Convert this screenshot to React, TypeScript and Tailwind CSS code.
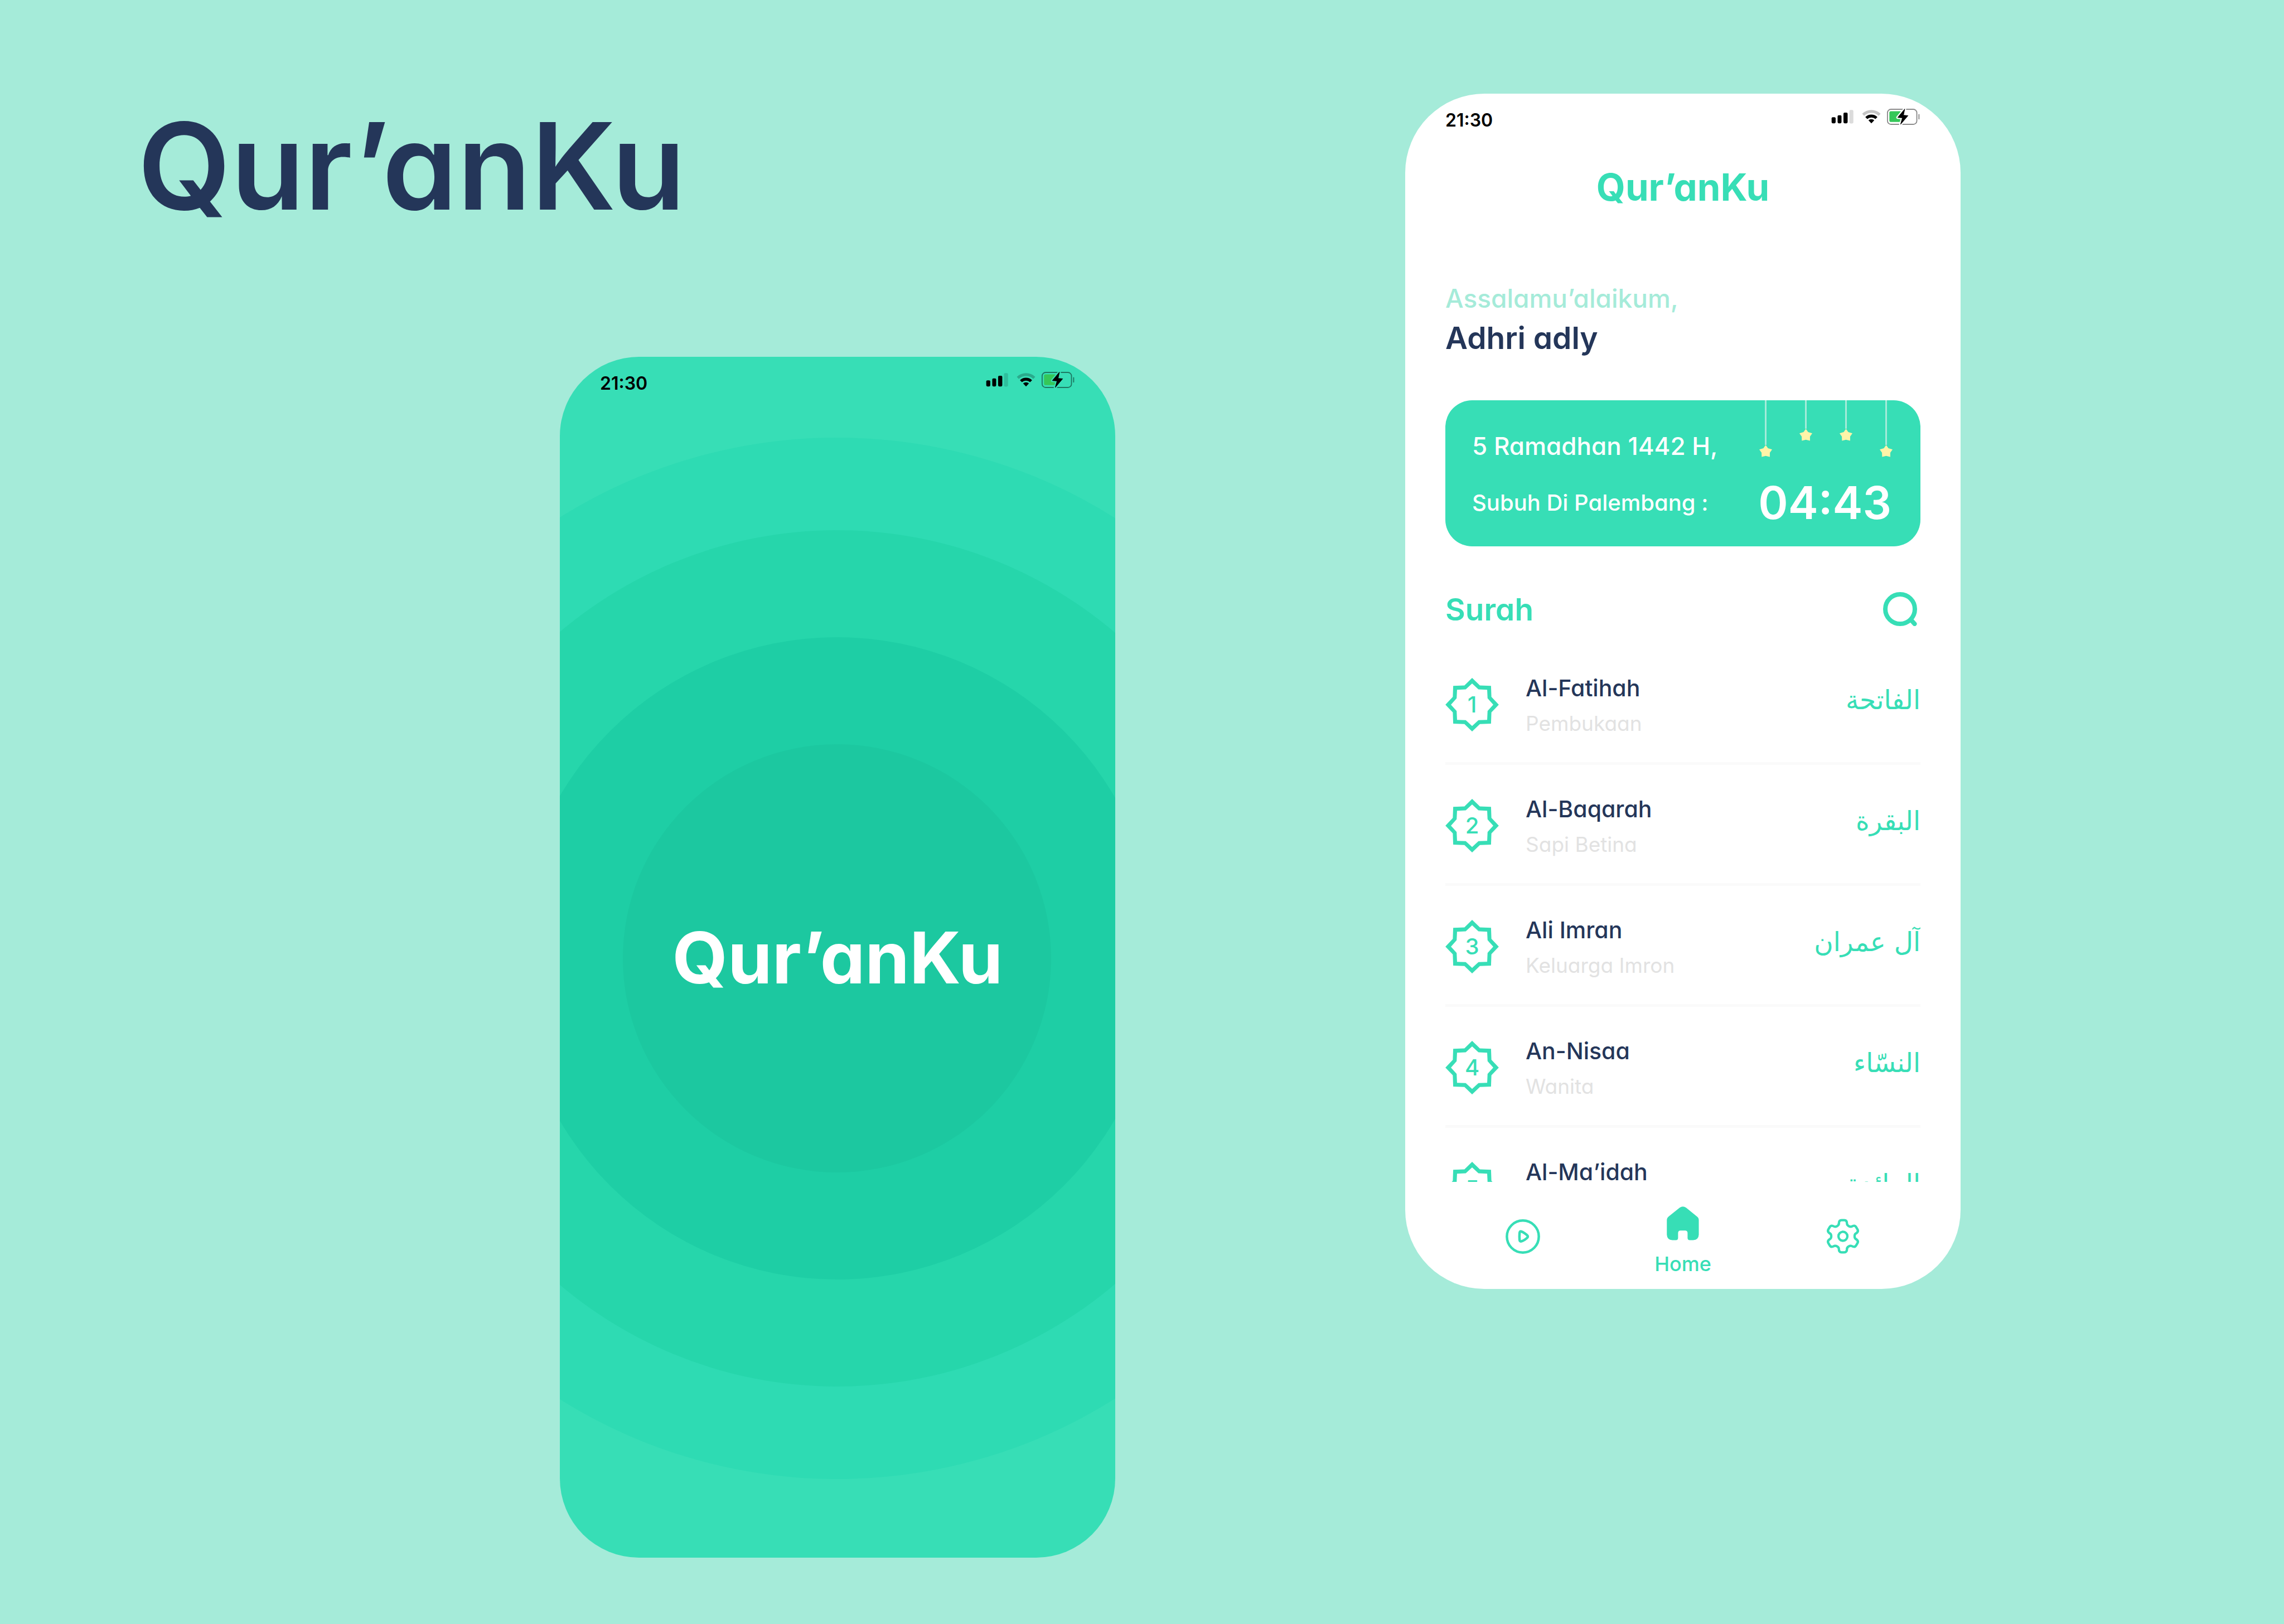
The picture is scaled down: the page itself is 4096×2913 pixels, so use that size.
import { useId } from "react";

type Surah = { number: number; name: string; meaning: string; arabic: string };

const surahs: Surah[] = [
  { number: 1, name: "Al-Fatihah", meaning: "Pembukaan", arabic: "الفاتحة" },
  { number: 2, name: "Al-Baqarah", meaning: "Sapi Betina", arabic: "البقرة" },
  { number: 3, name: "Ali Imran", meaning: "Keluarga Imron", arabic: "آل عمران" },
  { number: 4, name: "An-Nisaa", meaning: "Wanita", arabic: "النسّاء" },
  { number: 5, name: "Al-Ma’idah", meaning: "Hidangan", arabic: "المائدة" },
];

function StatusIcons() {
  const maskId = useId();
  const bolt = "M675 103 L621 168 L657 171 L643 221 L700 154 L665 151 Z";
  return (
    <svg className="h-[29px] w-[161px]" viewBox="112 101 678 124" aria-hidden="true">
      <rect x="114" y="166" width="31" height="47" rx="9" />
      <rect x="160" y="151" width="30" height="62" rx="9" />
      <rect x="205" y="131" width="32" height="82" rx="9" />
      <rect x="250" y="111" width="31" height="103" rx="9" opacity="0.14" />
      <g fill="none" stroke="#000">
        <path d="M355.8 147.6 A91 91 0 0 1 482.2 147.6" strokeWidth="22" opacity="0.23" />
        <path d="M380.1 172.7 A56 56 0 0 1 457.9 172.7" strokeWidth="22" />
      </g>
      <path d="M419 213 L396.5 190 A32 32 0 0 1 441.5 190 Z" />
      <mask id={maskId} maskUnits="userSpaceOnUse" x="500" y="90" width="300" height="150">
        <rect x="500" y="90" width="300" height="150" fill="#fff" />
        <path d={bolt} fill="#000" stroke="#000" strokeWidth="22" strokeLinejoin="round" />
      </mask>
      <g mask={`url(#${maskId})`}>
        <rect x="542.5" y="105.5" width="225" height="115" rx="27" fill="none" stroke="#000" strokeWidth="8" opacity="0.46" />
        <rect x="557" y="120" width="92" height="83" rx="12" fill="#35C759" />
      </g>
      <path d={bolt} stroke="#000" strokeWidth="4" strokeLinejoin="round" />
      <rect x="780" y="142" width="8" height="41" rx="4" opacity="0.46" />
    </svg>
  );
}

function StatusBar() {
  return (
    <div className="relative flex h-[100px] items-start justify-between px-[72px] pt-[27px]">
      <time className="pt-1 text-[32px] leading-[34px] font-semibold text-black">21:30</time>
      <StatusIcons />
    </div>
  );
}

function Badge({ value }: { value: number }) {
  return (
    <span className="relative flex size-24 shrink-0 items-center justify-center text-[40px] leading-none font-medium">
      <svg className="absolute inset-0 size-full" viewBox="17 31 404 405" aria-hidden="true">
        <path
          fill="currentColor"
          fillRule="evenodd"
          d="M219 31 278 88 362 91 365 174 421 234 365 292 362 377 278 380 219 436 161 380 76 377 73 292 17 234 73 174 76 91 161 88Z M219 73 267 117 333 121 336 185 379 234 336 281 333 348 267 351 219 395 171 351 105 348 102 281 59 234 102 185 105 121 171 117Z"
        />
      </svg>
      {value}
    </span>
  );
}

function HangingStar({ long = false }: { long?: boolean }) {
  return (
    <span className="flex flex-col items-center">
      <span className={long ? "h-20 w-[3px] bg-[#A5EBD9]" : "h-[51px] w-[3px] bg-[#A5EBD9]"} />
      <svg className="h-[22px] w-[23px]" viewBox="417 246 96 90">
        <path fill="#FFF4A8" d="M465 246 482 270 513 279 496 304 496 335 465 327 435 335 434 304 417 279 448 270Z" />
      </svg>
    </span>
  );
}

function SearchIcon() {
  return (
    <svg className="size-[61px]" viewBox="0 0 61 61" fill="none" stroke="currentColor" strokeWidth="8" aria-hidden="true">
      <circle cx="30.5" cy="30.5" r="26.5" />
      <path d="M51 51 L56.5 57" strokeLinecap="round" />
    </svg>
  );
}

function PlayIcon() {
  return (
    <svg className="h-[62px] w-[62px]" viewBox="47 164 262 262" fill="none" stroke="currentColor" strokeWidth="19" aria-hidden="true">
      <circle cx="178" cy="295" r="121" />
      <path d="M163 256 C180 260 205 278 213 288 Q218 295 213 302 C205 312 180 329 163 332 Q154 333 153 320 Q151 295 153 269 Q155 255 163 256Z" />
    </svg>
  );
}

function HomeIcon() {
  return (
    <svg className="h-[61px] w-[58px]" viewBox="1270 72 245 256" fill="currentColor" aria-hidden="true">
      <path d="M1368 81 Q1392 64 1417 81 L1500 148 Q1513 158 1513 175 V286 Q1511 325 1470 327 H1445 Q1428 327 1428 310 V273 Q1428 254 1409 254 H1374 Q1356 254 1356 273 V310 Q1356 327 1339 327 H1313 Q1273 325 1271 286 V175 Q1271 158 1285 147 Z" />
    </svg>
  );
}

function GearIcon() {
  return (
    <svg className="h-[63px] w-[58px]" viewBox="-123 -133 246 266" fill="none" stroke="currentColor" strokeWidth="18" strokeLinecap="round" aria-hidden="true">
      <circle r="34" />
      {[0, 60, 120, 180, 240, 300].map((angle) => (
        <path
          key={angle}
          transform={`rotate(${angle})`}
          d="M-31 -95 C-31 -112 -24 -122 -10 -122 H10 C24 -122 31 -112 31 -95 C31 -81 54.6 -67.3 66.8 -74.3"
        />
      ))}
    </svg>
  );
}

function SplashScreen() {
  return (
    <section className="relative flex min-h-[2154px] w-full max-w-[996px] flex-col overflow-hidden rounded-[142px] bg-[#37DEB6]">
      <svg className="absolute inset-0 size-full" viewBox="0 0 996 2154" preserveAspectRatio="xMidYMid slice" aria-hidden="true">
        <circle cx="497" cy="1079" r="934" fill="#2EDBB3" />
        <circle cx="497" cy="1079" r="768" fill="#26D6AB" />
        <circle cx="497" cy="1079" r="576" fill="#1ECEA5" />
        <circle cx="497" cy="1079" r="384" fill="#1CC8A0" />
      </svg>
      <StatusBar />
      <div className="relative flex flex-1 items-center justify-center pb-[98px]">
        <p className="text-[128px] leading-none font-bold text-white">Qur’anKu</p>
      </div>
    </section>
  );
}

function PrayerCard() {
  return (
    <section className="relative rounded-[48px] bg-[#37DEB6] pt-[52px] pr-[52px] pb-[38px] pl-12 text-white">
      <div className="absolute top-0 right-[50px] flex items-start gap-[49px]" aria-hidden="true">
        <HangingStar long />
        <HangingStar />
        <HangingStar />
        <HangingStar long />
      </div>
      <p className="text-[44px] leading-[60px] font-medium">5 Ramadhan 1442 H,</p>
      <div className="mt-8 flex items-center justify-between leading-[80px]">
        <span className="text-[40px] font-medium">Subuh Di Palembang :</span>
        <time className="text-[81px] font-semibold">04:43</time>
      </div>
    </section>
  );
}

function SurahRow({ surah }: { surah: Surah }) {
  return (
    <li>
      <a href={`#surah-${surah.number}`} className="flex h-[217px] items-center gap-12 border-b-[5px] border-[#FAFAFA] pt-[5px]">
        <Badge value={surah.number} />
        <span className="flex flex-1 flex-col pt-1 leading-[64px]">
          <span className="text-[41px] font-medium text-[#243659]">{surah.name}</span>
          <span className="text-[37px] text-[#E2E2E2]">{surah.meaning}</span>
        </span>
        <span lang="ar" dir="rtl" className="pb-4 font-['DejaVu_Sans',sans-serif] text-[47px] leading-[64px]">
          {surah.arabic}
        </span>
      </a>
    </li>
  );
}

function HomeScreen() {
  return (
    <section className="mt-[168px] flex w-full flex-col overflow-hidden rounded-[142px] bg-white text-[#37DEB6]">
      <StatusBar />
      <div className="px-[72px]">
        <h2 className="mt-7 text-center text-[67px] leading-[80px] font-bold">Qur’anKu</h2>
        <p className="mt-[129px] text-[46px] leading-[60px] font-medium text-[#A5EBD9]">Assalamu’alaikum,</p>
        <p className="mt-[5px] mb-19 text-[55px] leading-[72px] font-semibold text-[#243659]">Adhri adly</p>
        <PrayerCard />
        <div className="mt-[82px] flex items-center justify-between pr-[6px]">
          <h3 className="text-[55px] leading-[60px] font-semibold">Surah</h3>
          <button type="button" aria-label="Cari surah">
            <SearchIcon />
          </button>
        </div>
        <ul className="mt-8 max-h-[965px] overflow-hidden">
          {surahs.map((surah) => (
            <SurahRow key={surah.number} surah={surah} />
          ))}
        </ul>
      </div>
      <nav className="grid grid-cols-3 items-start justify-items-center px-[67px] pt-11 pb-[23px]">
        <button type="button" aria-label="Putar" className="flex h-[107px] items-center">
          <PlayIcon />
        </button>
        <button type="button" className="flex flex-col items-center gap-5 text-[36px] leading-[44px] font-medium">
          <HomeIcon />
          Home
        </button>
        <button type="button" aria-label="Pengaturan" className="flex h-[107px] items-center">
          <GearIcon />
        </button>
      </nav>
    </section>
  );
}

export default function App() {
  return (
    <main className="grid min-h-screen grid-cols-[2000fr_996fr] items-start gap-x-[520px] bg-[#A5EBD9] pr-[580px] pb-[119px] font-[Inter,sans-serif] [font-feature-settings:'cv11']">
      <div className="flex flex-col items-end pt-[190px]">
        <h1 className="mb-[234px] w-full pl-[247px] text-[216px] leading-[216px] font-semibold text-[#243659]">Qur’anKu</h1>
        <SplashScreen />
      </div>
      <HomeScreen />
    </main>
  );
}
